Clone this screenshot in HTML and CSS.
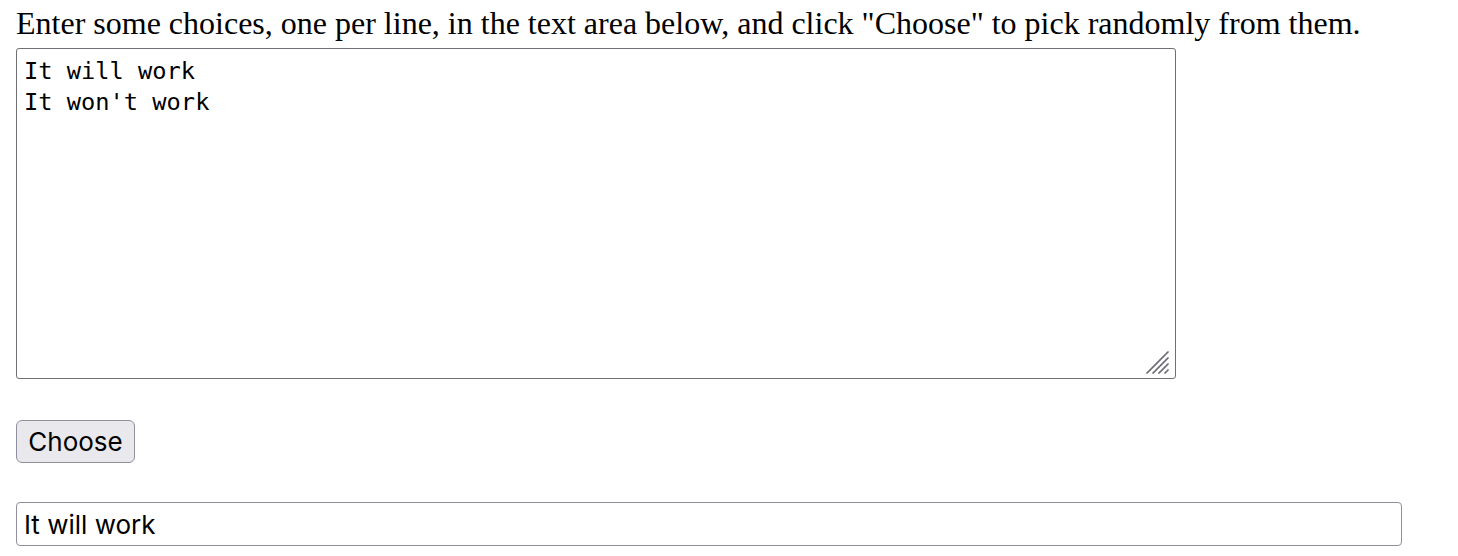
FILE: index.html
```html
<!DOCTYPE html>
<html>
<head>
<meta charset="utf-8">
<link rel="stylesheet" href="styles.css">
</head>
<body>
<main class="page">
  <div class="intro">Enter some choices, one per line, in the text area below, and click "Choose" to pick randomly from them.</div>
  <div class="area-wrap">
    <textarea class="choices">It will work
It won't work</textarea>
    <svg class="grip" width="24" height="24" viewBox="0 0 24 24" aria-hidden="true">
      <g stroke="#6b6b73" stroke-width="1.7" stroke-linecap="round" stroke-dasharray="2.4 1.1">
        <line x1="1" y1="23" x2="22" y2="2"/>
        <line x1="7" y1="23" x2="22" y2="8"/>
        <line x1="13" y1="23" x2="22" y2="14"/>
        <line x1="19" y1="23" x2="22" y2="20"/>
      </g>
    </svg>
  </div>
  <div class="actions"><button class="choose" type="button">Choose</button></div>
  <input class="result" type="text" value="It will work">
</main>
</body>
</html>
```

FILE: styles.css
```css
html, body {
  margin: 0;
  padding: 0;
  background: #ffffff;
}

.page {
  display: flex;
  flex-direction: column;
  align-items: flex-start;
  padding: 6px 16px 0 16px;
}

.intro {
  font-family: "Liberation Serif", "Times New Roman", serif;
  font-size: 32px;
  line-height: 35px;
  color: #000;
}

.area-wrap {
  position: relative;
  margin-top: 7px;
  display: flex;
}

.choices {
  box-sizing: border-box;
  width: 1160px;
  height: 331px;
  margin: 0;
  padding: 7px 7px;
  border: 1.5px solid #6f6f76;
  border-radius: 3px;
  font-family: "DejaVu Sans Mono", "Liberation Mono", monospace;
  font-size: 23.7px;
  line-height: 31px;
  color: #000;
  background: #fff;
  resize: none;
  outline: none;
}

.grip {
  position: absolute;
  right: 6px;
  bottom: 5px;
  pointer-events: none;
}

.actions {
  margin-top: 41px;
}

.choose {
  box-sizing: border-box;
  width: 119px;
  height: 43px;
  margin: 0;
  padding: 0 10px;
  border: 1.5px solid #8f8f9d;
  border-radius: 6px;
  background: #e9e9ed;
  font-family: Inter, "Liberation Sans", Arial, sans-serif;
  font-size: 26px;
  color: #000;
}

.result {
  box-sizing: border-box;
  width: 1386px;
  height: 44px;
  margin-top: 39px;
  padding: 0 7px;
  border: 1.5px solid #8f8f9d;
  border-radius: 4px;
  font-family: Inter, "Liberation Sans", Arial, sans-serif;
  font-size: 26px;
  color: #000;
  background: #fff;
}
```
